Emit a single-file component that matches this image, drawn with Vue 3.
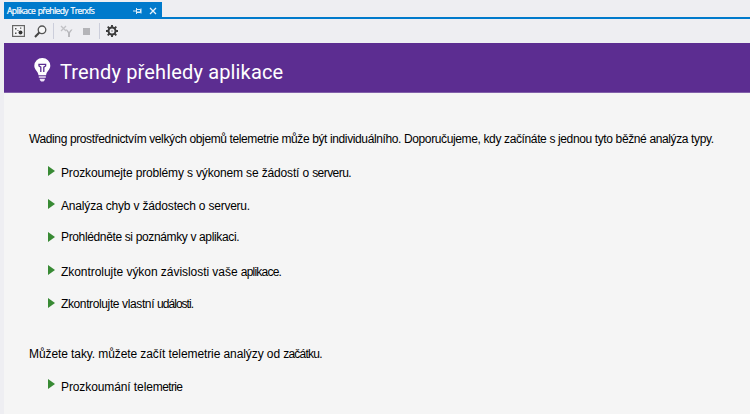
<script setup>
const items = [
  { key: 'a', parts: ['Prozkoumejte problémy s výkonem se žádostí o ', 'serveru.'] },
  { key: 'b', parts: ['Analýza chyb v žádostech o ', 'serveru.'] },
  { key: 'c', parts: ['Prohlédněte si poznámky v aplikaci.', ''] },
  { key: 'd', parts: ['Zkontrolujte výkon závislosti vaše ', 'aplikace.'] },
  { key: 'e', parts: ['Zkontrolujte vlastní ', 'události.'] },
]
</script>

<template>
  <div class="window">
    <div class="tabs">
      <div class="tab">
        <span class="tab-title">Aplikace přehledy Trerxfs</span>
        <svg class="pin" width="9" height="8" viewBox="0 0 9 8"><path d="M0 4h3M3.5 1v6M3.5 2.5h4v3h-4M3.5 5h4M8 1.5v5" fill="none" stroke="#dcecf8" /></svg>
        <svg class="close" width="8" height="8" viewBox="0 0 8 8"><path d="M1 1l6 6M7 1l-6 6" stroke="#e8f4fc" stroke-width="1.3" /></svg>
      </div>
    </div>
    <div class="toolbar">
      <svg width="13" height="12" viewBox="0 0 13 12"><rect x=".6" y=".6" width="11.8" height="10.8" fill="#f6f6f8" stroke="#666" stroke-width="1.2" /><path d="M3 3h1.500v1.500H3zM3 7.500h1.500V9H3zM8 2.500h1.300v1.300H8zM5.500 5h1v1h-1z" fill="#555" /><circle cx="8.500" cy="7.500" r="2" fill="#333" /></svg>
      <svg class="search" width="13" height="13" viewBox="0 0 13 13"><circle cx="8" cy="4.800" r="3.800" fill="#f7f7f8" stroke="#555" stroke-width="1.300" /><path d="M5.300 7.500L1 12" stroke="#444" stroke-width="2" /></svg>
      <i class="sep"></i>
      <svg class="filter" width="13" height="12" viewBox="0 0 13 12"><path d="M1 1l5 5M6 1L1 6" stroke="#c2c2c6" stroke-width="1.300" /><path d="M5.500 4.500h1.500l2 2.500 2-2.500h1.500L10 8v4H8V8z" fill="#b8b8bc" /></svg>
      <i class="stop"></i>
      <i class="sep second"></i>
      <svg class="gear" width="12" height="12" viewBox="0 0 12 12"><circle cx="6" cy="6" r="3.500" fill="none" stroke="#3c3c3c" stroke-width="2" /><circle cx="6" cy="6" r=".8" fill="#777" /><path d="M6 0v2.500M6 9.500V12M0 6h2.500M9.500 6H12M1.700 1.700l1.800 1.800M8.500 8.500l1.800 1.800M1.700 10.300l1.800-1.800M8.500 3.500l1.800-1.800" stroke="#3c3c3c" stroke-width="1.900" /></svg>
    </div>
    <main>
      <header>
        <svg width="17" height="24" viewBox="0 0 17 24"><path d="M8.300 0A7.900 7.700 0 0 0 .3 7.700c0 4 3.700 5.300 4.200 9.600h7.600c.5-4.300 4.200-5.600 4.200-9.600A7.900 7.700 0 0 0 8.300 0z" fill="#fff" /><path d="M4.300 6.300h8M5 6.300v1.700l1.800 1.200V14M11.600 6.300v1.700L9.800 9.200V14" fill="none" stroke="#5c2d91" stroke-width="1.300" /><path d="M4.800 18.300h7v1.500h-7zM5.800 20.800h5V22l-1.300 1.600H7.100L5.800 22z" fill="#eee4f8" /></svg>
        <h1>Trendy přehledy aplikace</h1>
      </header>
      <p class="intro">Wading prostřednictvím velkých objemů telemetrie může být individuálního. <span class="tail">Doporučujeme, kdy začínáte s jednou tyto běžné analýza typy.</span></p>
      <ul>
        <li v-for="item in items" :key="item.key" :class="item.key">
          <i class="arrow"></i><span class="label">{{ item.parts[0] }}<span class="tail">{{ item.parts[1] }}</span></span>
        </li>
      </ul>
      <p class="also">Můžete taky. můžete začít telemetrie analýzy od <span class="tail">začátku.</span></p>
      <ul class="last">
        <li class="f"><i class="arrow"></i><span class="label">Prozkoumání tele<span class="tail">metrie</span></span></li>
      </ul>
    </main>
  </div>
</template>

<style>
body { margin: 0; overflow: hidden; }
</style>
<style scoped>
.window { width: 750px; height: 414px; background: #eeeef2; font: 12px/16px "Liberation Sans", Arial, sans-serif; color: #000; overflow: hidden; box-sizing: border-box; padding-top: 2px; }
svg { display: block; flex: none; }
.tabs { height: 17px; margin-left: 4px; border-bottom: 2px solid #007acc; box-sizing: border-box; display: flex; }
.tab { width: 158px; height: 17px; background: #007acc; display: flex; align-items: center; }
.tab-title { width: 129px; padding-left: 3px; box-sizing: border-box; color: #fff; font: 8.5px/16px "Open Sans", sans-serif; letter-spacing: -.6px; word-spacing: 1px; white-space: nowrap; -webkit-text-stroke: .2px #fff; }
.close { margin-left: 7px; }
.toolbar { height: 24px; padding-left: 8px; margin-left: 4px; display: flex; align-items: center; }
.search { margin-left: 9px; }
.sep { width: 1px; height: 16px; background: #cccedb; margin-left: 6px; }
.filter { margin-left: 6px; }
.stop { width: 7px; height: 7px; background: #b4b4b8; margin-left: 10px; }
.second { margin-left: 9px; }
.gear { margin-left: 6px; }
main { margin-left: 4px; height: 371px; background: #f5f5f5; }
header { height: 50px; box-sizing: border-box; padding: 3px 0 0 30px; background: #5c2d91; border-bottom: 1px solid #8260aa; display: flex; align-items: center; }
header svg { margin-top: 1px; }
h1 { margin: 5px 0 0 9px; color: #fff; font: 400 20px/26px Roboto, sans-serif; letter-spacing: .15px; white-space: nowrap; }
p { margin: 0; padding-left: 25px; white-space: pre; }
.intro { padding-top: 38px; height: 16px; letter-spacing: -.38px; }
.intro .tail { letter-spacing: -.37px; }
ul { list-style: none; margin: 15px 0 0; padding: 0 0 0 44px; }
li { height: 33px; display: flex; align-items: flex-start; white-space: pre; }
.arrow { width: 7px; height: 10px; margin-top: 4px; background: #388a34; clip-path: polygon(0 0, 100% 50%, 0 100%); }
.label { margin: 3px 0 0 6px; }
.a { letter-spacing: -.155px; }
.a .tail { letter-spacing: -.55px; }
.b { letter-spacing: -.17px; }
.b .tail { letter-spacing: -.25px; }
.c { letter-spacing: -.36px; }
.c .label { margin-top: 1px; }
.d { letter-spacing: -.045px; }
.d .tail { letter-spacing: -.79px; }
.e { letter-spacing: -.38px; }
.e .label { margin-top: 2px; }
.e .tail { letter-spacing: -.97px; }
.also { margin-top: 19px; letter-spacing: -.09px; }
.also .tail { letter-spacing: -.78px; }
.last { margin-top: 13px; }
.f { letter-spacing: -.1px; }
.f .label { margin-top: 4px; }
.f .tail { letter-spacing: -.63px; }
</style>
